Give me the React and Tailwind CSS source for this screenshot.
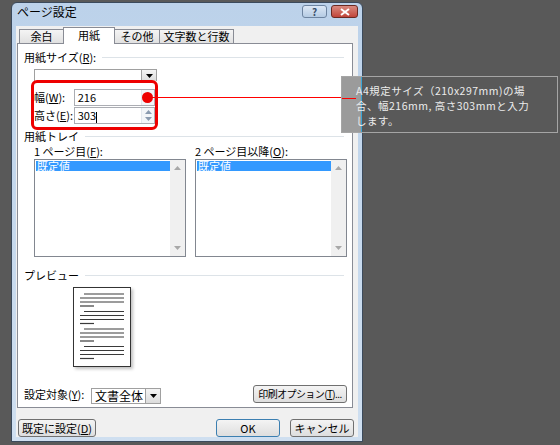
import React from "react";

const Arrow = ({ dir = "down", className = "" }) => (
  <svg width="7" height="4" viewBox="0 0 7 4" className={className}>
    {dir === "down" ? <path d="M0 0H7L3.5 4Z" fill="currentColor" /> : <path d="M0 4H7L3.5 0Z" fill="currentColor" />}
  </svg>
);

const DropButton = () => (
  <div className="w-[15px] h-full border-l border-[#a0a0a0] bg-gradient-to-b from-[#f4f4f4] to-[#dcdcdc] flex items-center justify-center text-black">
    <Arrow />
  </div>
);

const GroupHeader = ({ children }) => (
  <div className="flex items-center h-[13px] pr-[8px]">
    <span className="mr-[6px]">{children}</span>
    <div className="flex-1 h-px bg-[#dde3e8]" />
  </div>
);

const Spin = () => (
  <div className="w-[13px] h-full flex flex-col border-l border-[#e3e8ee] text-[#8a9bb0]">
    <div className="flex-1 flex items-center justify-center bg-[#f3f6f9]"><Arrow dir="up" /></div>
    <div className="flex-1 flex items-center justify-center bg-[#f3f6f9]"><Arrow /></div>
  </div>
);

const ListBox = ({ w }) => (
  <div className={`${w} h-[98px] border border-[#828790] bg-white flex`}>
    <div className="flex-1 pl-[1px] pt-[1px]">
      <div className="bg-[#3399ff] text-white h-[10px] leading-[10px] pl-[1px]">既定値</div>
    </div>
    <div className="w-[15px] bg-[#f0f0f0] flex flex-col justify-between items-center py-[6px] text-[#a8a8a8]">
      <Arrow dir="up" />
      <Arrow />
    </div>
  </div>
);

const Btn = ({ children, w, primary, small }) => (
  <div
    className={`${w} h-[18px] rounded-[3px] border ${primary ? "border-[#3c7fb1]" : "border-[#707070]"} bg-gradient-to-b from-[#f4f4f4] to-[#dedede] flex items-center justify-center whitespace-nowrap leading-none ${small ? "text-[10px] tracking-[-0.6px]" : "text-[11px]"}`}
  >
    {children}
  </div>
);

const PreviewPage = () => {
  const paras = [0, 1, 2, 3];
  return (
    <div className="ml-[49px] mt-[5px] w-[58px] h-[80px] bg-white border border-[#333] shadow-[2px_2px_3px_rgba(0,0,0,0.25)]">
      <svg width="56" height="78" viewBox="0 0 56 78">
        {paras.map((p) => {
          const y = 6 + p * 17.5;
          return (
            <g key={p} stroke="#3a3a3a" strokeWidth="1.2">
              <line x1="10" y1={y} x2="50" y2={y} />
              <line x1="6" y1={y + 4} x2="50" y2={y + 4} />
              <line x1="6" y1={y + 8} x2="50" y2={y + 8} />
              <line x1="6" y1={y + 12} x2="20" y2={y + 12} />
            </g>
          );
        })}
      </svg>
    </div>
  );
};

const notes = ["A4規定サイズ（210x297mm)の場", "合、幅216mm, 高さ303mmと入力", "します。"];

export default function App() {
  return (
    <div className="relative w-[560px] h-[445px] bg-[#595959] overflow-hidden pl-[11px] pt-[2px] font-['Noto_Sans_CJK_JP','Noto_Sans',sans-serif] text-[11px] text-black">
      {/* dialog */}
      <div className="w-[352px] h-[440px] border border-[#3b4a5c] rounded-t-[6px] bg-gradient-to-b from-[#bcd2ea] to-[#cfdff0] flex flex-col">
        {/* title bar */}
        <div className="h-[23px] flex items-start justify-between pl-[5px] pr-[4px]">
          <span className="text-[12px] leading-[20px] mt-[-1px]">ページ設定</span>
          <div className="flex gap-[4px] pt-[2px]">
            <div className="w-[25px] h-[13px] rounded-[3px] border border-[#6d84a0] bg-gradient-to-b from-[#dce8f5] to-[#b5cbe3] flex items-center justify-center text-[10px] font-bold text-[#3a4f6a] leading-none">?</div>
            <div className="w-[27px] h-[13px] rounded-[3px] border border-[#6b2a22] bg-gradient-to-b from-[#d98a80] to-[#c0443a] flex items-center justify-center">
              <svg width="10" height="8" viewBox="0 0 10 8">
                <path d="M1 1L9 7M9 1L1 7" stroke="white" strokeWidth="2" />
              </svg>
            </div>
          </div>
        </div>

        {/* content */}
        <div className="flex-1 bg-[#f0f0f0] mx-[4px] mb-[4px] pl-[1px] pr-[4px] pt-[1px] flex flex-col">
          {/* tabs */}
          <div className="flex items-end h-[17px] ml-[2px] text-[11px] -mb-px">
            <div className="w-[44px] h-[15px] border border-[#898c95] border-r-0 bg-gradient-to-b from-[#f4f4f4] to-[#e1e1e1] flex items-center justify-center leading-none">余白</div>
            <div className="relative z-10 w-[52px] h-[17px] border border-[#898c95] border-b-0 bg-white flex items-center justify-center leading-none pb-[1px]">用紙</div>
            <div className="w-[45px] h-[15px] border border-[#898c95] border-l-0 bg-gradient-to-b from-[#f4f4f4] to-[#e1e1e1] flex items-center justify-center leading-none">その他</div>
            <div className="w-[74px] h-[15px] border border-[#898c95] border-l-0 bg-gradient-to-b from-[#f4f4f4] to-[#e1e1e1] flex items-center justify-center leading-none">文字数と行数</div>
          </div>

          {/* tab panel */}
          <div className="w-[336px] h-[365px] bg-white border border-[#898c95] pl-[6px] pt-[7px] flex flex-col">
            <GroupHeader>
              用紙サイズ(<span className="underline">R</span>):
            </GroupHeader>

            <div className="ml-[10px] mt-[5px] w-[123px] h-[12px] border border-b-0 border-[#a0a0a0] bg-white flex justify-end">
              <DropButton />
            </div>

            <div className="ml-[7px] -mt-px w-[127px] h-[50px] border-[3px] border-[#ee0000] rounded-[6px] bg-white pt-[6px] flex flex-col gap-[1px]">
              <div className="flex items-center h-[17px]">
                <span className="w-[40px]">
                  幅(<span className="underline">W</span>):
                </span>
                <div className="w-[82px] h-[17px] border border-[#abadb3] flex">
                  <span className="flex-1 pl-[3px] leading-[15px]">216</span>
                  <Spin />
                </div>
              </div>
              <div className="flex items-center h-[17px]">
                <span className="w-[40px]">
                  高さ(<span className="underline">E</span>):
                </span>
                <div className="w-[82px] h-[17px] border border-[#abadb3] flex">
                  <span className="flex-1 pl-[3px] leading-[15px]">
                    303<span className="inline-block w-px h-[11px] bg-black align-middle" />
                  </span>
                  <Spin />
                </div>
              </div>
            </div>

            <GroupHeader>用紙トレイ</GroupHeader>

            <div className="flex ml-[10px] mt-[2px] gap-[9px]">
              <div className="flex flex-col gap-[1px]">
                <span className="h-[13px] leading-[13px]">
                  1 ページ目(<span className="underline">F</span>):
                </span>
                <ListBox w="w-[152px]" />
              </div>
              <div className="flex flex-col gap-[1px]">
                <span className="h-[13px] leading-[13px]">
                  2 ページ目以降(<span className="underline">O</span>):
                </span>
                <ListBox w="w-[152px]" />
              </div>
            </div>

            <div className="mt-[12px]">
              <GroupHeader>プレビュー</GroupHeader>
            </div>

            <PreviewPage />

            <div className="mt-[17px] h-[20px] flex items-center pr-[5px]">
              <span className="w-[67px]">
                設定対象(<span className="underline">Y</span>):
              </span>
              <div className="mt-[3px] w-[70px] h-[16px] border border-[#a0a0a0] bg-white flex">
                <span className="flex-1 pl-[3px] leading-[14px] text-[12px]">文書全体</span>
                <DropButton />
              </div>
              <div className="ml-auto">
                <Btn w="w-[94px]" small>
                  印刷オプション(<span className="underline">T</span>)...
                </Btn>
              </div>
            </div>
          </div>

          {/* bottom buttons */}
          <div className="mt-[11px] flex ml-px">
            <Btn w="w-[78px]">
              既定に設定(<span className="underline">D</span>)
            </Btn>
            <div className="ml-auto flex gap-[10px]">
              <Btn w="w-[64px]" primary>OK</Btn>
              <Btn w="w-[64px]">キャンセル</Btn>
            </div>
          </div>
        </div>
      </div>

      {/* callout line and dot */}
      <div className="absolute left-[148px] top-[97px] w-[208px] h-0 border-t border-[#ff0000]" />
      <div className="absolute left-[142px] top-[92px] w-[11px] h-[11px] rounded-full bg-[#ee0000]" />

      {/* annotation */}
      <div className="absolute left-[341px] top-[76px] w-[217px] h-[57px] border border-[#a5a5a5] bg-[#595959]">
        <div className="absolute left-0 top-0 w-[19px] h-full bg-[#9b9b9b]" />
        <div className="absolute left-[19px] top-0 w-px h-full bg-[#3aa6d8]" />
        <div className="absolute left-0 top-[21px] w-[14px] h-0 border-t border-[#ff0000]" />
        <div className="relative pl-[14px] pt-[6px] flex flex-col text-[10.5px] tracking-[0.5px] text-[#ececec] whitespace-nowrap">
          {notes.map((t) => (
            <div key={t} className="h-[15px] leading-[15px]">
              {t}
            </div>
          ))}
        </div>
      </div>
    </div>
  );
}
